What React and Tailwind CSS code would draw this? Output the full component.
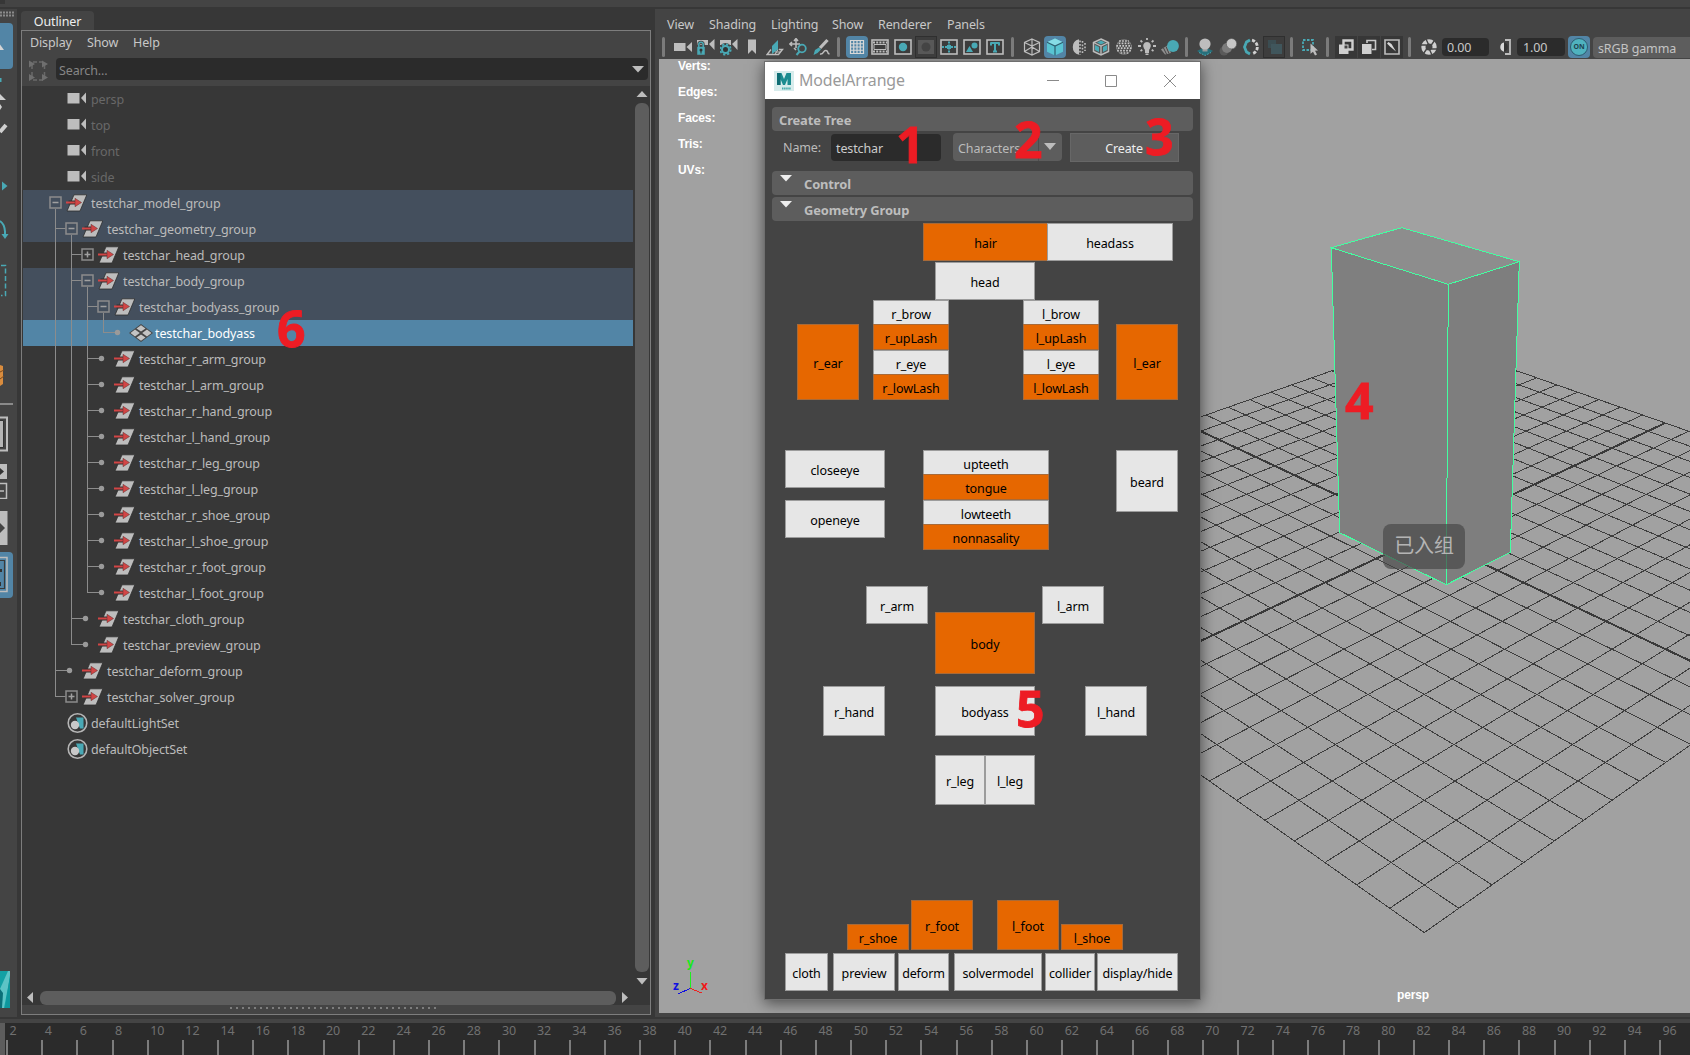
import React from "react";

const G = "#bdbdbd";
const T = "#49a9b5";

/* ---------- small building blocks ---------- */

function Icon({ children, w = 18, h = 18, className = "" }) {
  return (
    <svg width={w} height={h} viewBox={`0 0 ${w} ${h}`} className={`block shrink-0 ${className}`} fill="none">
      {children}
    </svg>
  );
}

function Sep({ className = "" }) {
  return <span className={`h-5 w-[3px] shrink-0 rounded-sm bg-[#7b7b7b] ${className}`} />;
}

function Cell({ children, on, pressed, boxed }) {
  return (
    <span className="flex h-[22px] w-[23px] shrink-0 items-center justify-center">
      <span
        className={`flex h-[22px] w-[22px] items-center justify-center ${
          on ? "rounded-sm bg-[#5285a6]" : pressed ? "border border-[#2f2f2f] bg-[#3d3d3d]" : boxed ? "h-5 w-5 bg-[#373737]" : ""
        }`}
      >
        {children}
      </span>
    </span>
  );
}

/* ---------- viewport toolbar icons ---------- */

const CamSmall = () => (
  <g fill={G}>
    <path d="M0 2h11v5H0z" />
    <path d="M12 6 17.500 1v11z" />
  </g>
);

const Frame = ({ children }) => (
  <Icon>
    <rect x="1" y="2" width="16" height="14" stroke={G} strokeWidth="1.6" fill="#3c3c3c" />
    {children}
  </Icon>
);

const icons = {
  camera: (
    <Icon>
      <path d="M0 5h11.500v8H0zM12.500 9 18 4v10z" fill={G} />
    </Icon>
  ),
  lockCam: (
    <Icon>
      <CamSmall />
      <path d="M0 8.500h8V17H0z" fill={T} stroke="#444" strokeWidth=".5" />
      <path d="M1.800 8.500V6.500a2.200 2.200 0 0 1 4.400 0v2" stroke="#444" strokeWidth="3" />
      <path d="M1.800 9V6.500a2.200 2.200 0 0 1 4.400 0V9" stroke={T} strokeWidth="1.500" />
      <circle cx="4" cy="12" r="1.500" fill="#333" />
      <path d="M4 12v3.500" stroke="#333" />
    </Icon>
  ),
  gearCam: (
    <Icon>
      <CamSmall />
      <circle cx="5.500" cy="11.500" r="6.500" fill="#444" />
      <circle cx="5.500" cy="11.500" r="5.200" stroke={T} strokeWidth="1.800" strokeDasharray="2.200 1.880" />
      <circle cx="5.500" cy="11.500" r="3.500" stroke={T} strokeWidth="2" fill="#333" />
    </Icon>
  ),
  bookmark: (
    <Icon>
      <path d="M5 1.500h8V16l-4-4-4 4z" fill={G} />
    </Icon>
  ),
  plane: (
    <Icon>
      <path d="M6 8 12 2v9.500L6 16z" fill={T} />
      <path d="M5 11.500 1 16.500h11.500l4-5H13" stroke={G} strokeWidth="1.400" />
      <path d="M9 14h5.500M12 11.500 9 16.500" stroke={G} />
    </Icon>
  ),
  panZoom: (
    <Icon>
      <path d="M7 1v9M1 6h10M5 3l2-2.500L9 3M3 4 .8 6 3 8M5 10l2 2" stroke={G} strokeWidth="1.500" />
      <circle cx="13" cy="10.500" r="3.800" stroke={T} strokeWidth="1.800" />
      <path d="M10.500 13.500 7.500 17" stroke={T} strokeWidth="2" />
    </Icon>
  ),
  brush: (
    <Icon>
      <path d="M15.500 2 8 10" stroke={G} strokeWidth="3.200" />
      <path d="M7 9.500 9 11.500 5.500 15l-4 2L3 12z" fill={T} />
      <path d="M8 16c4 1 3-4 6-3.500s1 4 3.500 3" stroke={G} strokeWidth="1.500" />
    </Icon>
  ),
  grid: (
    <Icon>
      <path d="M2.500 2.500h13v13h-13zM5.750 2.500v13M9 2.500v13M12.250 2.500v13M2.500 5.750h13M2.500 9h13M2.500 12.250h13" stroke="#d8d8d8" strokeWidth="1.200" />
    </Icon>
  ),
  film: (
    <Frame>
      <path d="M2 4.500h14M2 13.500h14" stroke={G} strokeWidth="2" strokeDasharray="2 1.200" />
      <path d="M3 6.500h12v5H3z" stroke={G} />
    </Frame>
  ),
  gate: (
    <Frame>
      <circle cx="9" cy="9" r="4.200" fill={T} />
    </Frame>
  ),
  gateOff: (
    <Icon>
      <path d="M1 2h16v14H1z" fill="#585858" />
      <circle cx="9" cy="9" r="4.500" fill="#444" />
    </Icon>
  ),
  chart: (
    <Frame>
      <path d="M2 9h14M9 3.500v11" stroke={T} strokeWidth="2" strokeDasharray="2 1" />
      <path d="M7 7h4v4H7z" fill={T} />
    </Frame>
  ),
  safeAction: (
    <Frame>
      <circle cx="11.500" cy="7.500" r="3" fill={T} />
      <path d="m3 14 3.500-6 3.500 6z" fill={T} />
    </Frame>
  ),
  safeTitle: (
    <Frame>
      <path d="M4.500 5h9M5 4.500v3M13 4.500v3M9 4.500v9.500M7 13.500h4" stroke={T} strokeWidth="2" />
    </Frame>
  ),
  wireCube: (
    <Icon>
      <path d="m9 1 7.500 3.500v9L9 17l-7.500-3.500v-9zM1.500 4.500 9 8l7.500-3.500M9 8v9M9 1v8l-7.500 4.500M9 9l7.500 4.500" stroke={G} strokeWidth="1.200" />
    </Icon>
  ),
  solidCube: (
    <Icon>
      <path d="m9 .5 8 3.800v9.500L9 17.500l-8-3.700V4.300z" fill="#58c4d2" />
      <path d="m9 .5 8 3.800L9 8 1 4.300z" fill="#86dce6" />
      <path d="m1 4.300 8 3.700 8-3.700M9 8v9.500" stroke="#2d5f70" strokeWidth="1.200" />
    </Icon>
  ),
  halfSphere: (
    <Icon>
      <path d="M10 1.200a8 8 0 0 0 0 15.600z" fill={G} />
      <path d="M11 2.500v14M13.500 3v12M16 5v8" stroke={G} strokeWidth="1.600" strokeDasharray="1.800 1.600" />
    </Icon>
  ),
  texCube: (
    <Icon>
      <path d="m9 1 7.500 3.500v9L9 17l-7.500-3.500v-9z" fill="#555" stroke={G} strokeWidth="1.500" />
      <path d="m5 4.500 4-2 4 2-4 2zM3 7l4 2v5l-4-2zM11 9l4-2v5l-4 2z" fill={T} />
      <path d="M1.500 4.500 9 8l7.500-3.500M9 8v9" stroke={G} strokeWidth="1.300" />
    </Icon>
  ),
  dither: (
    <Icon>
      <circle cx="9" cy="9" r="7.500" fill="#4b4b4b" stroke="#8a8a8a" strokeWidth=".6" />
      {[3, 5.4, 7.8, 10.2, 12.6, 15].map((y, j) => {
        const half = Math.sqrt(60 - (9 - y) * (9 - y));
        return (
          <path
            key={y}
            d={`M${9 - half} ${y}h${half * 2}`}
            stroke="#c8c8c8"
            strokeWidth="1.700"
            strokeDasharray="1.700 1.300"
            strokeDashoffset={j % 2 ? 1.5 : 0}
          />
        );
      })}
    </Icon>
  ),
  bulb: (
    <Icon>
      <path d="M9 4a4 4 0 0 0-3 6.500c1 1 1 1.500 1 4.500h4c0-3 0-3.500 1-4.500A4 4 0 0 0 9 4z" fill={G} />
      <path d="M7.500 15.500h3V17h-3z" fill={G} />
      <path d="M9 0v2M0 8h3M15 8h3M2.500 2.500l1.800 1.600M15.500 2.500l-1.800 1.600M2.500 13l1.800-1.200M15.500 13l-1.800-1.200" stroke={G} strokeWidth="1.800" />
    </Icon>
  ),
  shadowBall: (
    <Icon>
      <path d="M0 11.500 7 7l3 8-6 1.500z" fill="#8f8f8f" />
      <path d="m2.500 10 3 6M5 8.500l3 7" stroke="#444" />
      <circle cx="12" cy="8" r="5.900" fill={T} />
    </Icon>
  ),
  occlusion: (
    <Icon>
      <path d="m9 9 8 4-8 4.500L1 13z" fill="#26707c" />
      <path d="m3 14.500 6 3 6-3" stroke={T} strokeDasharray="2 1" />
      <path d="M6.500 9h5v4.500h-5z" fill="#999" />
      <circle cx="9" cy="6" r="5.600" fill={G} />
    </Icon>
  ),
  motionBlur: (
    <Icon>
      <circle cx="5" cy="13" r="4.500" fill="#5a5a5a" />
      <circle cx="8" cy="10" r="5" fill="#7c7c7c" />
      <circle cx="12.500" cy="5.700" r="5.200" fill="#c6c6c6" stroke="#555" strokeWidth=".6" />
    </Icon>
  ),
  antialias: (
    <Icon>
      <path d="M8 2 4.500 4 2.500 9l2 5L8 16" stroke={T} strokeWidth="2.800" />
      <path d="M10 2.200a7 7 0 0 1 0 13.600" stroke="#d0d0d0" strokeWidth="2.800" strokeDasharray="3.200 1.400" />
    </Icon>
  ),
  depthOff: (
    <Icon>
      <path d="M3 2h8v8H3z" fill="#3b4d52" />
      <path d="M6 6h11v10H6z" fill="#40565c" />
    </Icon>
  ),
  isolate: (
    <Icon>
      <path d="M2 2h10v10H2z" stroke={T} strokeWidth="1.800" strokeDasharray="2.500 1.500" />
      <path d="m9.500 5.500 7.500 7-3 .3 2 3.700-2 1-2-3.700-2.500 2z" fill={G} />
    </Icon>
  ),
  xray: (
    <Icon>
      <path d="M6.500 2.500h9v9h-9z" stroke="#d0d0d0" strokeWidth="2.400" />
      <path d="M2 6.500h9.500V16H2z" fill="#d0d0d0" />
      <path d="M7.500 7.500h3v3h-3z" fill="#444" />
    </Icon>
  ),
  xrayJoint: (
    <Icon>
      <path d="M7 5V2.500h8.500v9H12" stroke="#c8c8c8" strokeWidth="1.600" />
      <path d="M2 6h9.500v10H2z" fill="#d0d0d0" />
    </Icon>
  ),
  xrayActive: (
    <Icon>
      <path d="M2 2h14v14H2z" stroke={G} strokeWidth="1.600" />
      <path d="M4 5.500 5.500 4l3 2 4.500 7.500-6-5z" fill="#d8d8d8" />
    </Icon>
  ),
  aperture: (
    <Icon>
      <circle cx="9" cy="9" r="5.600" stroke="#d0d0d0" strokeWidth="4.200" />
      <path d="m6 1 2.500 5.500M14.500 2.500 11 7.500M17.500 11h-6M12 17l-2.500-5.500M3.500 15.500 7 10.500M.5 7h6" stroke="#444" strokeWidth="1.400" />
    </Icon>
  ),
  contrast: (
    <Icon>
      <path d="M9 2h5v14H9" stroke={G} strokeWidth="1.800" />
      <path d="M8 4.500a4.700 4.700 0 0 0 0 9.200z" fill="#d8d8d8" />
      <path d="M8 4.500a4.700 4.700 0 0 1 0 9.200z" fill="#333" />
    </Icon>
  ),
};

/* ---------- left tool box, cropped at the window edge ---------- */

function ToolBox() {
  return (
    <div className="flex w-[17px] shrink-0 flex-col items-start overflow-hidden bg-[#444444]">
      <Icon w={17} h={14}>
        <path d="M0 3.500h14M0 6.500h14" stroke="#8a8a8a" strokeWidth="2" strokeDasharray="2 1" />
      </Icon>
      <div className="flex h-[46px] w-[13px] items-center rounded-r-sm bg-[#5285a6]">
        <Icon w={8} h={14}>
          <path d="M0 5.500 4 11H0z" fill="#d5d5d5" />
        </Icon>
      </div>
      <Icon w={17} h={44}>
        <path d="M0 9h1.500v4H0z" fill={T} />
        <path d="m0 25 6 6H0zM0 35l2 3-2 3z" fill="#d0d0d0" />
      </Icon>
      <Icon w={17} h={28}>
        <path d="m0 19 6-7" stroke="#d0d0d0" strokeWidth="4" />
      </Icon>
      <Icon w={17} h={60} className="mt-[30px]">
        <path d="m2 10.500 5.500 4.500L2 19.500z" fill={T} />
        <path d="M0 50c3 2 5 6 5 12" stroke={T} strokeWidth="2" />
      </Icon>
      <Icon w={17} h={10}>
        <path d="M5 0v3" stroke={T} strokeWidth="2" />
        <path d="M1.500 3H8.500L5 8z" fill={T} />
      </Icon>
      <Icon w={17} h={36} className="mt-5">
        <path d="M1 4.500h4.500v30H1" stroke={T} strokeWidth="1.500" strokeDasharray="5 2.500" />
      </Icon>
      <Icon w={17} h={26} className="mt-[65px]">
        <path d="M0 3 3 4v18l-3 2z" fill="#d98c3e" />
        <path d="m0 10 4-2M0 17l4-3" stroke="#7c4a1c" />
      </Icon>
      <div className="mt-[15px] h-0.5 w-[13px] shrink-0 bg-[#8a8a8a]" />
      <Icon w={17} h={36} className="mt-[11px]">
        <path d="M-2 1.500h9v33h-9" stroke={G} strokeWidth="2" />
        <path d="M-2 4.500h5.500v27H-2z" fill="#b5b5b5" stroke="#333" />
      </Icon>
      <Icon w={17} h={36} className="mt-[11px]">
        <path d="M0 1h7v15H0z" fill={G} />
        <path d="m0 5 4 3.500L0 12z" fill="#333" />
        <path d="M-1 20.500h7.500v15H-1" stroke={G} strokeWidth="1.500" />
        <path d="M0 28h4" stroke={G} strokeWidth="1.500" />
      </Icon>
      <Icon w={17} h={36} className="mt-[11px]">
        <path d="M0 1h7.500v34H0z" fill={G} />
        <path d="m0 13 5 5-5 5z" fill="#444" />
      </Icon>
      <div className="mt-[6px] flex h-[46px] w-[13px] shrink-0 items-center rounded-r-sm bg-[#5285a6]">
        <Icon w={12} h={38}>
          <path d="M0 1.500h7v34H0" stroke={G} strokeWidth="1.500" />
          <path d="M0 4.500h4.500v28H0" stroke="#3a3a3a" strokeWidth="1.200" />
          <path d="M0 13h2v3H0zM0 26h1v4H0z" fill="#333" />
        </Icon>
      </div>
      <Icon w={10} h={37} className="mt-[373px]">
        <path d="M0 0h10v37H0z" fill="#12a0a4" />
        <path d="M0 18 8 0h2v6L4 37H2z" fill="#5cc4c6" />
        <path d="M0 18 3 22 2 37H0z" fill="#0b6f78" />
        <path d="M10 4v33H5z" fill="#0e969c" />
      </Icon>
    </div>
  );
}

/* ---------- outliner ---------- */

// rails: continuous guide columns; join: "t" (more siblings) or "l" (last sibling)
const treeRows = [
  { label: "testchar_model_group", depth: 0, box: "-", tone: "soft" },
  { label: "testchar_geometry_group", depth: 1, box: "-", join: "t", tone: "soft" },
  { label: "testchar_head_group", depth: 2, box: "+", rails: [0], join: "t" },
  { label: "testchar_body_group", depth: 2, box: "-", rails: [0], join: "t", tone: "soft" },
  { label: "testchar_bodyass_group", depth: 3, box: "-", rails: [0, 1], join: "t", tone: "soft" },
  { label: "testchar_bodyass", depth: 4, rails: [0, 1, 2], join: "l", tone: "sel", mesh: true },
  { label: "testchar_r_arm_group", depth: 3, rails: [0, 1], join: "t" },
  { label: "testchar_l_arm_group", depth: 3, rails: [0, 1], join: "t" },
  { label: "testchar_r_hand_group", depth: 3, rails: [0, 1], join: "t" },
  { label: "testchar_l_hand_group", depth: 3, rails: [0, 1], join: "t" },
  { label: "testchar_r_leg_group", depth: 3, rails: [0, 1], join: "t" },
  { label: "testchar_l_leg_group", depth: 3, rails: [0, 1], join: "t" },
  { label: "testchar_r_shoe_group", depth: 3, rails: [0, 1], join: "t" },
  { label: "testchar_l_shoe_group", depth: 3, rails: [0, 1], join: "t" },
  { label: "testchar_r_foot_group", depth: 3, rails: [0, 1], join: "t" },
  { label: "testchar_l_foot_group", depth: 3, rails: [0, 1], join: "l" },
  { label: "testchar_cloth_group", depth: 2, rails: [0], join: "t" },
  { label: "testchar_preview_group", depth: 2, rails: [0], join: "l" },
  { label: "testchar_deform_group", depth: 1, join: "t" },
  { label: "testchar_solver_group", depth: 1, box: "+", join: "l" },
];

function Guides({ depth, box, rails = [], join }) {
  const w = (depth + 1) * 16;
  const own = depth * 16 + 8.5;
  const par = own - 16;
  return (
    <Icon w={w} h={26}>
      <g stroke="#8c8c8c" strokeWidth="1">
        {rails.map((c) => (
          <path key={c} d={`M${c * 16 + 8.5} 0v26`} />
        ))}
        {join && <path d={`M${par} 0v${join === "t" ? 26 : 13}M${par} 12.500H${box ? own - 6 : own - 2}`} />}
        {box && (
          <>
            <rect x={own - 5.5} y="7" width="11" height="11" strokeWidth="1.500" />
            <path d={`M${own - 3} 12.500h6`} strokeWidth="1.500" stroke="#a0a0a0" />
            {box === "+" && <path d={`M${own} 9.500v6`} strokeWidth="1.500" stroke="#a0a0a0" />}
            {box === "-" && <path d={`M${own} 19v7`} />}
          </>
        )}
      </g>
      {!box && join && <circle cx={own - 2} cy="12.500" r="2.700" fill="#9a9a9a" />}
    </Icon>
  );
}

const GroupIcon = () => (
  <Icon w={21} h={18}>
    <path d="M8 .8H20.800L14 17H1z" fill="#bdbdbd" stroke="#2e2e2e" strokeWidth=".8" />
    <path d="M2.500 8.500h7" stroke="#303030" strokeWidth="4" />
    <path d="M0 8.500h10" stroke="#d24545" strokeWidth="2" />
    <path d="M9 4.300 15.500 8.500 9 12.700z" fill="#d24545" stroke="#5a3030" strokeWidth=".5" />
  </Icon>
);

const MeshIcon = () => (
  <Icon w={24} h={18}>
    <path d="M12 0 24 9l-12 9L0 9z" fill="#474747" />
    <g fill="#c4c4c4">
      <path d="m12 1.200 4.500 3.200L12 7.600 7.500 4.400zM12 10.400l4.500 3.200-4.500 3.200-4.500-3.200zM6 5.500l4.800 3.500L6 12.500 1.500 9zM18 5.500 22.500 9 18 12.500 13.200 9z" />
    </g>
  </Icon>
);

const SetIcon = () => (
  <Icon w={21} h={22}>
    <circle cx="10.500" cy="11" r="9.300" stroke="#b5b5b5" strokeWidth="1.600" />
    <path d="M9 5.500h7.500v11H13z" fill={T} />
    <circle cx="8" cy="13" r="4.200" fill="#c8c8c8" />
  </Icon>
);

function Outliner() {
  return (
    <div className="flex w-[634px] shrink-0 flex-col pr-[3px] pl-1">
      <div className="mt-[2px] flex h-[19px] shrink-0">
        <div className="flex w-[73px] items-center justify-center rounded-t-sm bg-[#444444] text-[#eeeeee]">
          <span className="mt-0.5">Outliner</span>
        </div>
      </div>
      <div className="flex h-[985px] w-[630px] shrink-0 flex-col border border-[#7d7d7d] bg-[#444444]">
        <div className="flex h-[25px] items-center pb-0.5 pl-2 text-[#c8c8c8]">
          <span className="w-[57px]">Display</span>
          <span className="w-[46px]">Show</span>
          <span>Help</span>
        </div>
        <div className="flex h-[30px] items-start pt-0.5 pl-[7px]">
          <Icon w={19} h={22} className="mt-0.5">
            <path d="M4 2h11M4 20h11" stroke="#696969" strokeWidth="1.500" strokeDasharray="4 2" />
            <path d="M3 4v14M15.500 4v14" stroke="#696969" strokeWidth="1.500" strokeDasharray="5 3" />
            <path d="m0 .5 6 3.500-6 3.500zM13 .5l6 3.500-6 3.500zM0 14l6 3.500L0 21zM13 14l6 3.500-6 3.500z" fill="#6f6f6f" />
          </Icon>
          <div className="ml-2 flex h-[22px] w-[592px] items-center justify-between rounded-sm bg-[#2b2b2b] pr-1 pl-[3px] text-[#868686]">
            <span className="mt-[3px]">Search...</span>
            <Icon w={12} h={7}>
              <path d="M0 0h12L6 6.500z" fill="#bdbdbd" />
            </Icon>
          </div>
        </div>
        <div className="flex h-[919px] shrink-0 bg-[#373737] pl-px">
          <div className="flex w-[610px] flex-col text-[#bbbbbb]">
            {["persp", "top", "front", "side"].map((n) => (
              <div key={n} className="flex h-[26px] shrink-0 items-center pl-[44px] text-[#686868]">
                <Icon w={20} h={13} className="-mt-0.5">
                  <path d="M.5 1h12v10.500H.5zM14 6l5-5.500v11z" fill={G} />
                </Icon>
                <span className="mt-0.5 ml-[4px]">{n}</span>
              </div>
            ))}
            {treeRows.map((r) => (
              <div
                key={r.label}
                className={`flex h-[26px] shrink-0 items-center pl-[24px] ${
                  r.tone === "soft" ? "bg-[#444f5d]" : r.tone === "sel" ? "bg-[#5285a6] text-white" : ""
                }`}
              >
                <Guides {...r} />
                {r.mesh ? (
                  <span className="mr-0.5 ml-0.5"><MeshIcon /></span>
                ) : (
                  <span className="-mt-px mr-[4px] ml-[3px]"><GroupIcon /></span>
                )}
                <span className="mt-px">{r.label}</span>
              </div>
            ))}
            {["defaultLightSet", "defaultObjectSet"].map((n) => (
              <div key={n} className="flex h-[26px] shrink-0 items-center pl-[44px]">
                <SetIcon />
                <span className="mt-px ml-[3px]">{n}</span>
              </div>
            ))}
            <div className="mt-auto flex h-[14px] items-center pl-[4px]">
              <Icon w={7} h={12}>
                <path d="M6 0v11L0 5.500z" fill="#bdbdbd" />
              </Icon>
              <div className="ml-[6px] h-[14px] w-[576px] shrink-0 rounded-md bg-[#5d5d5d]" />
              <Icon w={8} h={12} className="ml-1.5">
                <path d="M0 0v11l6-5.500z" fill="#bdbdbd" />
              </Icon>
            </div>
          </div>
          <div className="ml-[2px] flex w-[14px] flex-col items-center">
            <Icon w={12} h={8} className="mt-1">
              <path d="M.500 7h11L6 1z" fill="#bdbdbd" />
            </Icon>
            <div className="mt-[5px] h-[869px] w-[14px] shrink-0 rounded-md bg-[#5d5d5d]" />
            <Icon w={12} h={8} className="mt-1.5">
              <path d="M.500 0h11L6 6.500z" fill="#bdbdbd" />
            </Icon>
          </div>
        </div>
        <div className="flex h-[9px] pl-[208px]">
          <Icon w={208} h={4} className="mt-[2px]">
            <path d="M0 1h208" stroke="#7d7d7d" strokeWidth="2" strokeDasharray="2 4" />
          </Icon>
        </div>
      </div>
    </div>
  );
}

/* ---------- perspective scene ---------- */

// Ground plane: u, v are cell indices counted from the corner nearest the camera.
const project = (u, v) => {
  const w = 1 + 0.0419 * ((u + v) / 2);
  return [765.3 + (70.45 * (u - v)) / 2 / w, -311.7 + 1185.3 / w];
};
const segment = (a, b) => {
  const [x1, y1] = project(...a);
  const [x2, y2] = project(...b);
  return `M${x1.toFixed(1)} ${y1.toFixed(1)}L${x2.toFixed(1)} ${y2.toFixed(1)}`;
};
const steps = Array.from({ length: 25 }, (_, i) => i);
const gridPath = steps.map((i) => segment([i, 0], [i, 24]) + segment([0, i], [24, i])).join("");
const axisPath = segment([12, 0], [12, 24]) + segment([0, 12], [24, 12]);

function Scene() {
  return (
    <svg width="1031" height="954" viewBox="0 0 1031 954" className="block" fill="none" shapeRendering="crispEdges">
      <path d={gridPath} stroke="#3e3e3e" strokeWidth="1" />
      <path d={axisPath} stroke="#3a3a3a" strokeWidth="2" />
      <path d="M672.300 188.700 789.300 225.300 787.300 525.700 680.700 473.700z" fill="#7f7f7f" />
      <path d="M789.300 225.300 860.300 202.700 851.300 493.300 787.300 525.700z" fill="#7e7e7e" />
      <path d="M742.700 168.700 860.300 202.700 789.300 225.300 672.300 188.700z" fill="#8d8d8d" />
      <path
        d="M742.700 168.700 860.300 202.700 789.300 225.300 672.300 188.700zM672.300 188.700l8.400 285 106.600 52 64-32.400 9-290.600M789.300 225.300l-2 300.400"
        stroke="#43ffa1"
        strokeWidth="1"
      />
      <path d="M31.500 913v17" stroke="#20ee20" />
      <path d="m31.500 929.500 11 4.500" stroke="#ee2020" />
      <path d="m31.500 929.500-12 5" stroke="#1010e0" />
    </svg>
  );
}

/* ---------- ModelArrange window ---------- */

const pickerButtons = [
  ["hair", 158, 2, 125, 38, 1],
  ["headass", 282, 2, 126, 38],
  ["head", 170, 41, 100, 38],
  ["r_brow", 108, 79, 76, 26],
  ["r_upLash", 108, 103, 76, 26, 1],
  ["r_eye", 108, 129, 76, 26],
  ["r_lowLash", 108, 153, 76, 26, 1],
  ["l_brow", 258, 79, 76, 26],
  ["l_upLash", 258, 103, 76, 26, 1],
  ["l_eye", 258, 129, 76, 26],
  ["l_lowLash", 258, 153, 76, 26, 1],
  ["r_ear", 32, 103, 62, 76, 1],
  ["l_ear", 351, 103, 62, 76, 1],
  ["closeeye", 20, 229, 100, 38],
  ["openeye", 20, 279, 100, 38],
  ["upteeth", 158, 229, 126, 26],
  ["tongue", 158, 253, 126, 26, 1],
  ["lowteeth", 158, 279, 126, 26],
  ["nonnasality", 158, 303, 126, 26, 1],
  ["beard", 351, 229, 62, 62],
  ["r_arm", 101, 365, 62, 38],
  ["l_arm", 277, 365, 62, 38],
  ["body", 170, 391, 100, 62, 1],
  ["r_hand", 58, 465, 62, 50],
  ["bodyass", 170, 465, 100, 50],
  ["l_hand", 320, 465, 62, 50],
  ["r_leg", 170, 534, 50, 50],
  ["l_leg", 220, 534, 50, 50],
  ["r_foot", 146, 679, 62, 50, 1],
  ["l_foot", 232, 679, 62, 50, 1],
  ["r_shoe", 82, 703, 62, 26, 1],
  ["l_shoe", 296, 703, 62, 26, 1],
];

const lightButton = "border-[#9c9c9c] bg-[#e6e6e6]";
const hotButton = "border-[#a86a38] bg-[#e66700]";

function SectionHeader({ title, className = "" }) {
  return (
    <div className={`flex h-6 shrink-0 items-center rounded-sm bg-[#5d5d5d] pl-[8px] font-bold text-[#bdbdbd] ${className}`}>
      <Icon w={12} h={7} className="-mt-[9px]">
        <path d="M0 0h12L6 6.500z" fill="#eeeeee" />
      </Icon>
      <span className="mt-0.5 ml-[12px] text-[12.9px]">{title}</span>
    </div>
  );
}

function Dialog() {
  return (
    <div className="absolute top-[2px] left-[105px] flex h-[939px] w-[437px] flex-col border border-[#6f6f6f] bg-[#444444] shadow-[0_3px_14px_rgba(0,0,0,0.55)]">
      <div className="flex h-[37px] shrink-0 items-center bg-white pl-[9px] text-[#999999]">
        <Icon w={20} h={20}>
          <path d="M0 0h20v20H0z" fill="#d7ecec" />
          <path d="M3 2h4.500L10 8l2.500-6H17v12h-3.500V8L11 14H9L6.500 8v6H3z" fill="#1c8c90" />
          <path d="M3 2h3.500v12H3z" fill="#0f6d74" />
          <path d="M8 17.500h9" stroke="#4aa" strokeWidth="2" strokeDasharray="1.500 .6" />
        </Icon>
        <span className="-mt-px ml-[5px] text-[15.9px]">ModelArrange</span>
        <Icon w={12} h={12} className="mr-[46px] ml-auto">
          <path d="M0 5.500h12" stroke="#8a8a8a" />
        </Icon>
        <Icon w={12} h={12} className="mr-[47px]">
          <path d="M.5.500h11v11H.5z" stroke="#8a8a8a" />
        </Icon>
        <Icon w={12} h={12} className="mr-[24px]">
          <path d="m0 0 12 12M12 0 0 12" stroke="#8a8a8a" />
        </Icon>
      </div>
      <div className="flex flex-col pt-2 pr-[7px] pl-[7px]">
        <div className="flex h-6 items-center rounded-sm bg-[#5d5d5d] pl-[7px] text-[12.9px] font-bold text-[#bdbdbd]">
          <span className="mt-0.5">Create Tree</span>
        </div>
        <div className="mt-0.5 flex h-[29px] items-start">
          <span className="mt-[6px] ml-[11px] w-[48px] text-[#bbbbbb]">Name:</span>
          <div className="mt-px flex h-[27px] w-[110px] items-center rounded-sm bg-[#2b2b2b] pt-0.5 pl-[5px] text-[#cccccc]">testchar</div>
          <div className="ml-[12px] flex h-[28px] w-[109px] items-center rounded-sm bg-[#5d5d5d] pl-[5px] text-[#bbbbbb]">
            <span className="mt-[3px] w-[80px]">Characters</span>
            <span className="h-full w-px bg-[#4d4d4d]" />
            <Icon w={12} h={8} className="ml-[5px]">
              <path d="M0 0h12L6 7z" fill="#bdbdbd" />
            </Icon>
          </div>
          <div className="ml-2 flex h-[29px] w-[109px] items-center justify-center border border-[#676767] bg-[#5d5d5d] pt-0.5 pr-px text-[#eeeeee]">Create</div>
        </div>
        <SectionHeader title="Control" className="mt-[9px]" />
        <SectionHeader title="Geometry Group" className="mt-[2px]" />
      </div>
      <div className="relative h-[731px] shrink-0 text-black">
        {pickerButtons.map(([label, left, top, width, height, hot]) => (
          <div
            key={label}
            className={`absolute flex items-center justify-center border pt-1 ${hot ? hotButton : lightButton}`}
            style={{ left, top, width, height }}
          >
            {label}
          </div>
        ))}
      </div>
      <div className="mt-px flex h-[38px] shrink-0 pr-[21px] pl-5 text-black [&>div]:flex [&>div]:items-center [&>div]:justify-center [&>div]:border [&>div]:pt-1">
        <div className={`w-[43px] ${lightButton}`}>cloth</div>
        <div className={`ml-[5px] w-[62px] ${lightButton}`}>preview</div>
        <div className={`ml-[3px] w-[51px] ${lightButton}`}>deform</div>
        <div className={`ml-[5px] w-[88px] ${lightButton}`}>solvermodel</div>
        <div className={`ml-[3px] w-[50px] ${lightButton}`}>collider</div>
        <div className={`ml-[2px] w-[81px] ${lightButton}`}>display/hide</div>
      </div>
    </div>
  );
}

/* ---------- viewport panel ---------- */

function Toolbar() {
  const i = icons;
  return (
    <div className="flex h-[22px] shrink-0 items-center pl-[7px]">
      <Sep className="mr-[6.500px]" />
      <Cell>{i.camera}</Cell>
      <Cell>{i.lockCam}</Cell>
      <Cell>{i.gearCam}</Cell>
      <Cell>{i.bookmark}</Cell>
      <Cell>{i.plane}</Cell>
      <Cell>{i.panZoom}</Cell>
      <Cell>{i.brush}</Cell>
      <Sep className="mr-[6px] ml-[4px]" />
      <Cell on>{i.grid}</Cell>
      <Cell>{i.film}</Cell>
      <Cell>{i.gate}</Cell>
      <Cell pressed>{i.gateOff}</Cell>
      <Cell>{i.chart}</Cell>
      <Cell>{i.safeAction}</Cell>
      <Cell>{i.safeTitle}</Cell>
      <Sep className="mr-[6.500px] ml-[4px]" />
      <Cell>{i.wireCube}</Cell>
      <Cell on>{i.solidCube}</Cell>
      <Cell>{i.halfSphere}</Cell>
      <Cell>{i.texCube}</Cell>
      <Cell>{i.dither}</Cell>
      <Cell>{i.bulb}</Cell>
      <Cell>{i.shadowBall}</Cell>
      <Sep className="mr-[6px] ml-[3.500px]" />
      <Cell>{i.occlusion}</Cell>
      <Cell>{i.motionBlur}</Cell>
      <Cell>{i.antialias}</Cell>
      <Cell pressed>{i.depthOff}</Cell>
      <Sep className="mr-[6px] ml-[4px]" />
      <Cell>{i.isolate}</Cell>
      <Sep className="mr-[6px] ml-[4px]" />
      <Cell boxed>{i.xray}</Cell>
      <Cell boxed>{i.xrayJoint}</Cell>
      <Cell boxed>{i.xrayActive}</Cell>
      <Sep className="mr-[7px] ml-[4px]" />
      <Cell>{i.aperture}</Cell>
      <span className="ml-[1.500px] flex h-[18px] w-[47px] shrink-0 items-center rounded-sm bg-[#2b2b2b] pt-0.5 pl-[5px] text-[#c8c8c8]">0.00</span>
      <span className="ml-[4px] flex"><Cell>{i.contrast}</Cell></span>
      <span className="ml-px flex h-[18px] w-[48px] shrink-0 items-center rounded-sm bg-[#2b2b2b] pt-0.5 pl-[6px] text-[#c8c8c8]">1.00</span>
      <span className="ml-[3px] flex h-[22px] w-[22px] shrink-0 items-center justify-center rounded-sm bg-[#5285a6]">
        <span className="flex h-[18px] w-[18px] items-center justify-center rounded-full border-[1.500px] border-[#2d5c70] bg-[#4fb3bf] text-[7px] font-bold text-[#1f4450]">ON</span>
      </span>
      <span className="ml-[3px] flex h-[21px] grow items-center overflow-hidden rounded-l-sm bg-[#5d5d5d] pt-1 pl-[5px] whitespace-nowrap text-[#c4c4c4]">
        sRGB gamma
      </span>
    </div>
  );
}

function Viewport() {
  return (
    <div className="flex min-w-0 grow flex-col bg-[#444444]">
      <div className="flex h-[27px] shrink-0 items-center pt-[5px] pl-3 text-[#c8c8c8]">
        <span className="w-[42px]">View</span>
        <span className="w-[62px]">Shading</span>
        <span className="w-[61px]">Lighting</span>
        <span className="w-[46px]">Show</span>
        <span className="w-[69px]">Renderer</span>
        <span>Panels</span>
      </div>
      <Toolbar />
      <div className="relative mt-px ml-1 h-[954px] shrink-0 overflow-hidden bg-[#a1a1a1]">
        <Scene />
        <div className="absolute top-[-6px] left-[19px] flex flex-col font-['Liberation_Sans',sans-serif] text-[12px] font-bold text-white">
          {["Verts:", "Edges:", "Faces:", "Tris:", "UVs:"].map((s) => (
            <span key={s} className="flex h-[26px] items-center">{s}</span>
          ))}
        </div>
        <span className="absolute top-[927px] left-[738px] font-['Liberation_Sans',sans-serif] text-[12px] leading-[18px] font-bold text-white">persp</span>
        <span className="absolute top-[896px] left-[28px] text-[12px] leading-4 font-bold text-[#18e818]">y</span>
        <span className="absolute top-[919px] left-[14px] text-[12px] leading-4 font-bold text-[#1010e0]">z</span>
        <span className="absolute top-[919px] left-[42px] text-[12px] leading-4 font-bold text-[#f01818]">x</span>
        <div className="absolute top-[465px] left-[724px] flex h-[45px] w-[82px] items-center justify-center rounded-lg bg-[#484848]/70 pb-1 font-['Noto_Sans_CJK_SC',sans-serif] text-[20px] font-normal text-[#b4b4b4]">
          已入组
        </div>
        <Dialog />
      </div>
    </div>
  );
}

/* ---------- time slider ---------- */

function TimeSlider() {
  const frames = Array.from({ length: 48 }, (_, k) => 2 + k * 2);
  return (
    <div className="flex h-8 shrink-0 overflow-hidden bg-[#2b2b2b] text-[12.5px] text-[#707070]">
      <div className="w-[5px] shrink-0 bg-[#5d5d5d]" />
      <div className="flex pl-px">
        {frames.map((f) => (
          <div key={f} className="flex w-[35.180px] shrink-0 flex-col">
            <span className="h-[17px] pl-[3.500px] leading-[16px]">{f}</span>
            <span className="h-[15px] w-0.5 bg-[#7c7c7c]" />
          </div>
        ))}
      </div>
    </div>
  );
}

/* ---------- numbered callouts ---------- */

function Callouts() {
  return (
    <div className="text-[50px] leading-none font-bold tracking-normal text-[#ed1c24] [-webkit-text-stroke:0.8px_#ed1c24] [&>span]:absolute">
      <span className="top-[119px] left-[896px]">1</span>
      <span className="top-[114px] left-[1014px]">2</span>
      <span className="top-[111px] left-[1145px]">3</span>
      <span className="top-[375px] left-[1345px]">4</span>
      <span className="top-[683px] left-[1016px]">5</span>
      <span className="top-[303px] left-[277px]">6</span>
    </div>
  );
}

export default function App() {
  return (
    <div className="relative flex h-[1055px] w-[1690px] flex-col overflow-hidden bg-[#373737] font-['Noto_Sans',sans-serif] text-[12.5px] leading-[18px] tracking-[-0.120px]">
      <div className="h-[7px] shrink-0 bg-[#444444]">
        <div className="h-1 w-[5px] bg-[#373737]" />
      </div>
      <div className="mt-0.5 flex h-[1008px] shrink-0">
        <ToolBox />
        <div className="flex">
          <Outliner />
        </div>
        <div className="-ml-px flex min-w-0 grow pl-[5px]">
          <Viewport />
        </div>
      </div>
      <div className="mt-0.5 h-[4px] shrink-0 bg-[#444444]" />
      <TimeSlider />
      <Callouts />
    </div>
  );
}
